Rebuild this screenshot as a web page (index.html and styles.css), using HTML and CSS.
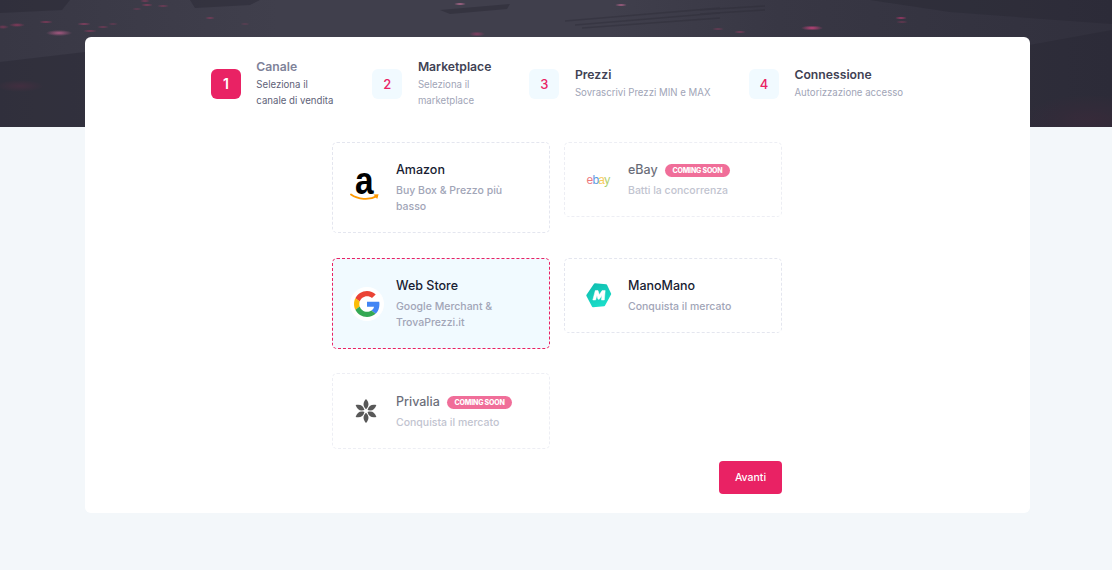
FILE: index.html
```html
<!DOCTYPE html>
<html lang="it">
<head>
    <meta charset="UTF-8">
    <meta name="viewport" content="width=device-width, initial-scale=1.0">
    <title>Nuovo canale</title>
    <link rel="stylesheet" href="styles.css">
</head>
<body>
    <div class="hero">
        <svg class="hero-bands" viewBox="0 0 1112 127" width="1112" height="127">
            <g fill="#282733" opacity=".45">
                <path d="M0 62L85 52V127H0Z"/>
                <path d="M0 0H70L62 10L0 13Z"/>
                <path d="M1030 45L1112 30V127H1030Z"/>
                <path d="M440 10L510 4L507 9L450 14Z"/>
                <path d="M190 0H260L250 5L195 8Z"/>
                <path d="M870 0H1112V24L950 12Z"/>
            </g>
            <g stroke="#2c2b36" stroke-width="1.4" opacity=".4">
                <path d="M565 21L720 8"/>
                <path d="M575 25L720 13"/>
                <path d="M582 28L720 18"/>
                <path d="M700 10L765 6"/>
                <path d="M700 14L765 10"/>
            </g>
        </svg>
    </div>

    <div class="panel">
        <!-- Stepper -->
        <div class="stepper">
            <div class="step step-current">
                <div class="step-num">1</div>
                <div class="step-text">
                    <div class="step-title">Canale</div>
                    <div class="step-sub">Seleziona il<br>canale di vendita</div>
                </div>
            </div>
            <div class="step">
                <div class="step-num">2</div>
                <div class="step-text">
                    <div class="step-title">Marketplace</div>
                    <div class="step-sub">Seleziona il<br>marketplace</div>
                </div>
            </div>
            <div class="step step-third">
                <div class="step-num">3</div>
                <div class="step-text">
                    <div class="step-title">Prezzi</div>
                    <div class="step-sub">Sovrascrivi Prezzi MIN e MAX</div>
                </div>
            </div>
            <div class="step step-fourth">
                <div class="step-num">4</div>
                <div class="step-text">
                    <div class="step-title">Connessione</div>
                    <div class="step-sub">Autorizzazione accesso</div>
                </div>
            </div>
        </div>

        <!-- Channels -->
        <div class="channels">
            <div class="channel">
                <div class="logo logo-amazon">
                    <span class="amazon-a">a</span>
                    <svg class="amazon-smile" viewBox="0 0 30 9" width="30" height="9">
                        <path d="M1 1.5C8 6.5 19 7.5 27 3.2" fill="none" stroke="#f90" stroke-width="1.9" stroke-linecap="round"/>
                        <path d="M23.5 1.6L28.6 1.2L27.2 6Z" fill="#f90"/>
                    </svg>
                </div>
                <div class="channel-text">
                    <div class="channel-title">Amazon</div>
                    <div class="channel-sub">Buy Box &amp; Prezzo più<br>basso</div>
                </div>
            </div>

            <div class="channel channel-off">
                <div class="logo logo-ebay"><span class="e-r">e</span><span class="e-b">b</span><span class="e-y">a</span><span class="e-g">y</span></div>
                <div class="channel-text">
                    <div class="channel-title">eBay <span class="soon">COMING SOON</span></div>
                    <div class="channel-sub">Batti la concorrenza</div>
                </div>
            </div>

            <div class="channel channel-on">
                <div class="logo logo-google">
                    <svg viewBox="0 0 48 48" width="26" height="26">
                        <path fill="#ea4335" d="M24 9.5c3.54 0 6.71 1.22 9.21 3.6l6.85-6.85C35.9 2.38 30.47 0 24 0 14.62 0 6.51 5.38 2.56 13.22l7.98 6.19C12.43 13.72 17.74 9.5 24 9.5z"/>
                        <path fill="#4285f4" d="M46.98 24.55c0-1.57-.15-3.09-.38-4.55H24v9.02h12.94c-.58 2.96-2.26 5.48-4.78 7.18l7.73 6c4.51-4.18 7.09-10.36 7.09-17.65z"/>
                        <path fill="#fbbc05" d="M10.53 28.59c-.48-1.45-.76-2.99-.76-4.59s.27-3.14.76-4.59l-7.98-6.19C.92 16.46 0 20.12 0 24c0 3.88.92 7.54 2.56 10.78l7.97-6.19z"/>
                        <path fill="#34a853" d="M24 48c6.48 0 11.93-2.13 15.89-5.81l-7.73-6c-2.15 1.45-4.92 2.3-8.16 2.3-6.26 0-11.57-4.22-13.47-9.91l-7.98 6.19C6.51 42.62 14.62 48 24 48z"/>
                    </svg>
                </div>
                <div class="channel-text">
                    <div class="channel-title">Web Store</div>
                    <div class="channel-sub">Google Merchant &amp;<br>TrovaPrezzi.it</div>
                </div>
            </div>

            <div class="channel">
                <div class="logo logo-mano">
                    <svg viewBox="0 0 26 25" width="26" height="25">
                        <defs>
                            <linearGradient id="manoFill" x1="0" y1="0" x2="0.5" y2="1">
                                <stop offset="0" stop-color="#0fbcae"/>
                                <stop offset="1" stop-color="#1adcc8"/>
                            </linearGradient>
                        </defs>
                        <path d="M9 1.5L20 2.5L24 11L18 22L7 23L1.5 12.5Z" fill="url(#manoFill)" stroke="url(#manoFill)" stroke-width="2.4" stroke-linejoin="round"/>
                        <path d="M6.8 17L9.3 7.6H12L13.3 11.8L16.1 7.6H19.2L18.3 17H15.4L15.9 12.6L13.3 16.2H12L10.9 12.4L9.6 17Z" fill="#fff" stroke="#fff" stroke-width=".5" stroke-linejoin="round"/>
                    </svg>
                </div>
                <div class="channel-text">
                    <div class="channel-title">ManoMano</div>
                    <div class="channel-sub">Conquista il mercato</div>
                </div>
            </div>

            <div class="channel channel-off channel-last">
                <div class="logo logo-privalia">
                    <svg viewBox="-13 -13 26 26" width="26" height="26">
                        <g fill="#000">
                            <path d="M0-1.8C-3.4-5-3.2-8.5 0-12C3.2-8.5 3.4-5 0-1.8Z"/>
                            <path d="M0-1.8C-3.4-5-3.2-8.5 0-12C3.2-8.5 3.4-5 0-1.8Z" transform="rotate(60)"/>
                            <path d="M0-1.8C-3.4-5-3.2-8.5 0-12C3.2-8.5 3.4-5 0-1.8Z" transform="rotate(120)"/>
                            <path d="M0-1.8C-3.4-5-3.2-8.5 0-12C3.2-8.5 3.4-5 0-1.8Z" transform="rotate(180)"/>
                            <path d="M0-1.8C-3.4-5-3.2-8.5 0-12C3.2-8.5 3.4-5 0-1.8Z" transform="rotate(240)"/>
                            <path d="M0-1.8C-3.4-5-3.2-8.5 0-12C3.2-8.5 3.4-5 0-1.8Z" transform="rotate(300)"/>
                        </g>
                    </svg>
                </div>
                <div class="channel-text">
                    <div class="channel-title">Privalia <span class="soon">COMING SOON</span></div>
                    <div class="channel-sub">Conquista il mercato</div>
                </div>
            </div>
        </div>

        <div class="actions">
            <button class="btn-next">Avanti</button>
        </div>
    </div>
</body>
</html>
```

FILE: styles.css
```css
body {
    font-family: Inter, "Liberation Sans", sans-serif;
    margin: 0;
    padding: 0;
    background-color: #f3f7fa;
    color: #181c32;
    height: 570px;
    overflow: hidden;
}

/* dark picture on top of the page, lights are just gradients */
.hero {
    height: 127px;
    background-color: #34333f;
    background-image:
        radial-gradient(ellipse 13px 3px at 59px 33px, rgba(240, 110, 170, .6), transparent),
        radial-gradient(ellipse 8px 2px at 17px 25px, rgba(235, 60, 120, .45), transparent),
        radial-gradient(ellipse 6px 2px at 3px 27px, rgba(235, 60, 120, .35), transparent),
        radial-gradient(ellipse 7px 1.5px at 46px 22px, rgba(235, 60, 120, .45), transparent),
        radial-gradient(ellipse 7px 1.5px at 84px 24px, rgba(235, 70, 130, .5), transparent),
        radial-gradient(ellipse 7px 1.5px at 90px 31px, rgba(235, 60, 120, .4), transparent),
        radial-gradient(ellipse 6px 1.5px at 103px 27px, rgba(235, 60, 120, .35), transparent),
        radial-gradient(ellipse 5px 1.5px at 113px 24px, rgba(235, 60, 120, .25), transparent),
        radial-gradient(ellipse 6px 1.5px at 147px 5px, rgba(235, 60, 120, .45), transparent),
        radial-gradient(ellipse 6px 1.5px at 163px 6px, rgba(235, 60, 120, .35), transparent),
        radial-gradient(ellipse 5px 1.5px at 137px 9px, rgba(235, 60, 120, .25), transparent),
        radial-gradient(ellipse 5px 1.5px at 145px 1px, rgba(235, 60, 120, .4), transparent),
        radial-gradient(ellipse 5px 1.5px at 210px 18px, rgba(235, 60, 120, .4), transparent),
        radial-gradient(ellipse 5px 1px at 245px 24px, rgba(235, 60, 120, .25), transparent),
        radial-gradient(ellipse 6px 1.5px at 460px 4px, rgba(245, 130, 180, .7), transparent),
        radial-gradient(ellipse 6px 1.5px at 621px 5px, rgba(245, 120, 175, .65), transparent),
        radial-gradient(ellipse 8px 2.5px at 477px 34px, rgba(235, 60, 130, .4), transparent),
        radial-gradient(ellipse 6px 1.5px at 718px 29px, rgba(235, 60, 120, .3), transparent),
        radial-gradient(ellipse 6px 1.5px at 740px 32px, rgba(235, 60, 120, .4), transparent),
        radial-gradient(ellipse 11px 2.5px at 812px 28px, rgba(240, 70, 140, .75), transparent),
        radial-gradient(ellipse 6px 1.5px at 901px 18px, rgba(240, 60, 130, .65), transparent),
        radial-gradient(ellipse 6px 1.5px at 902px 22px, rgba(235, 60, 120, .3), transparent),
        radial-gradient(ellipse 24px 6px at 20px 86px, rgba(160, 50, 90, .3), transparent),
        radial-gradient(ellipse 70px 25px at 1090px 120px, rgba(120, 40, 70, .25), transparent),
        linear-gradient(90deg, #383744 0, #403f4c 25%, #403f4c 55%, #383744 70%, #31303d 100%);
}

.hero-bands {
    display: block;
}

.panel {
    width: 945px;
    height: 476px;
    box-sizing: border-box;
    margin: -90px 0 0 85px;
    padding: 20px 0 0 0;
    background: #fff;
    border-radius: 6px;
}

.stepper {
    display: flex;
    justify-content: center;
    align-items: center;
    gap: 39px;
    padding-right: 1px;
    margin-bottom: 31px;
}

.step {
    display: flex;
    align-items: center;
    gap: 15.5px;
}

.step-third {
    margin-left: -1px;
}

.step-fourth {
    margin-left: -.5px;
}

.step-num {
    width: 30px;
    height: 30px;
    border-radius: 6px;
    background-color: #f1faff;
    color: #e92264;
    font-size: 13px;
    font-weight: 500;
    line-height: 30px;
    text-align: center;
}

.step-text {
    padding-bottom: 2px;
}

.step-title {
    font-size: 12.2px;
    font-weight: 600;
    line-height: 20px;
    color: #3f4254;
}

.step-sub {
    font-size: 9.65px;
    font-weight: 400;
    line-height: 16px;
    color: #a1a5b7;
}

.step-current .step-num {
    background-color: #e92264;
    color: #fff;
    font-size: 14px;
    font-weight: 600;
}

.step-current .step-title {
    color: #7e8299;
}

.step-current .step-sub {
    color: #5e6278;
}

.channels {
    display: grid;
    grid-template-columns: 218px 218px;
    column-gap: 14px;
    row-gap: 25px;
    align-items: start;
    width: 450px;
    margin-left: 247px;
}

.channel {
    display: flex;
    align-items: center;
    gap: 12px;
    box-sizing: border-box;
    padding: 17px 17px 17px 17px;
    border: 1px dashed #e4e6ef;
    border-radius: 5px;
}

/* last row sits a pixel higher but its text keeps the rhythm */
.channel-last {
    margin-top: -1px;
    padding-top: 18px;
}

.channel-off {
    opacity: .65;
}

.channel-on {
    background-color: #f1faff;
    border-color: #e92264;
}

.channel-title {
    font-size: 12.5px;
    font-weight: 500;
    line-height: 19px;
    margin-bottom: 4px;
    color: #181c32;
    white-space: nowrap;
}

.channel-sub {
    font-size: 10.5px;
    font-weight: 500;
    line-height: 16px;
    color: #a1a5b7;
    white-space: nowrap;
}

.soon {
    display: inline-block;
    margin-left: 4px;
    padding: 0 7.5px;
    height: 13px;
    border-radius: 7px;
    background-color: #e92264;
    color: #fff;
    font-size: 7px;
    font-weight: 800;
    line-height: 13px;
    letter-spacing: -.2px;
    vertical-align: 1px;
}

.logo {
    flex: none;
    width: 34px;
    height: 34px;
    display: flex;
    align-items: center;
    justify-content: center;
}

.logo-amazon {
    flex-direction: column;
    justify-content: flex-start;
    align-items: flex-start;
    margin-top: 2px;
}

.amazon-a {
    margin-left: 5px;
    font-family: "Liberation Sans", Arial, sans-serif;
    font-size: 38px;
    font-weight: 700;
    line-height: 18px;
    color: #000;
    transform: scaleX(.88);
    transform-origin: left;
}

.amazon-smile {
    margin-top: 3px;
}

.logo-ebay {
    box-sizing: border-box;
    padding-right: 2px;
    font-family: "Liberation Sans", Arial, sans-serif;
    font-size: 12px;
    letter-spacing: -.8px;
    line-height: 12px;
}

.e-r { color: #e53238; }
.e-b { color: #0064d2; }
.e-y { color: #f5af02; }
.e-g { color: #86b817; }

.logo-google {
    border-radius: 50%;
    background-color: #fff;
}

.logo-privalia {
    padding-right: 2px;
    box-sizing: border-box;
    margin-bottom: 2px;
}

.actions {
    display: flex;
    justify-content: flex-end;
    width: 450px;
    margin: 12px 0 0 247px;
}

.btn-next {
    width: 63px;
    height: 33px;
    padding: 0;
    border: none;
    border-radius: 4px;
    background-color: #e92264;
    color: #fff;
    font-family: inherit;
    font-size: 10.5px;
    font-weight: 500;
    cursor: pointer;
}
```
